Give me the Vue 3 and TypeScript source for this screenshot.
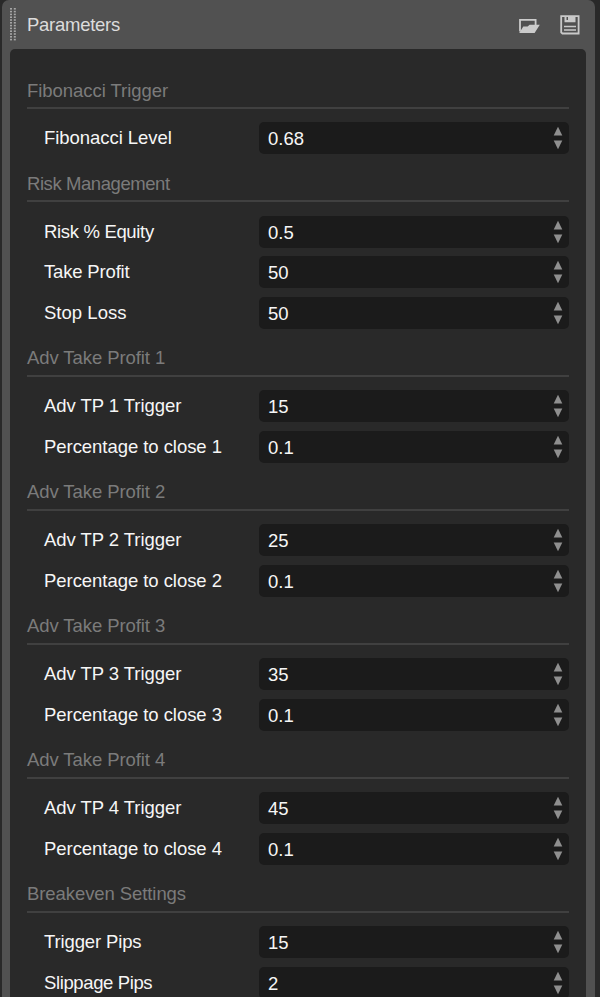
<script setup lang="ts">
import { reactive } from 'vue'

interface Param {
  label: string
  value: string
  spacing: number
}

interface Group {
  title: string
  spacing: number
  params: Param[]
}

const param = (label: string, value: string, spacing = -0.05): Param => ({ label, value, spacing })

const groups = reactive<Group[]>([
  { title: 'Fibonacci Trigger', spacing: -0.05, params: [param('Fibonacci Level', '0.68')] },
  {
    title: 'Risk Management',
    spacing: -0.43,
    params: [
      param('Risk % Equity', '0.5', -0.33),
      param('Take Profit', '50', -0.17),
      param('Stop Loss', '50', 0.03),
    ],
  },
  ...[1, 2, 3, 4].map((n) => ({
    title: `Adv Take Profit ${n}`,
    spacing: -0.08,
    params: [param(`Adv TP ${n} Trigger`, `${n * 10 + 5}`), param(`Percentage to close ${n}`, '0.1')],
  })),
  {
    title: 'Breakeven Settings',
    spacing: -0.08,
    params: [param('Trigger Pips', '15', -0.13), param('Slippage Pips', '2', -0.38)],
  },
])
</script>

<template>
  <div class="window">
    <section class="panel">
      <header class="header">
        <svg class="grip" width="6" height="34" viewBox="0 0 6 34">
          <template v-for="i in 12" :key="i">
            <rect x="0" :y="(i - 1) * 2.8" width="2" height="1.6" />
            <rect x="3.8" :y="(i - 1) * 2.8" width="2" height="1.6" />
          </template>
        </svg>
        <h1 class="heading">Parameters</h1>
        <svg class="icon open" width="21" height="16" viewBox="0 0 21 16">
          <path d="M1 13.5V1.9H16.6V7" fill="none" stroke="#cbcbcb" stroke-width="1.8" />
          <path d="M0.2 15L4.3 8.6H8.6L10.6 6.8H20.8L15.6 15Z" fill="#cbcbcb" />
        </svg>
        <svg class="icon save" width="20" height="20" viewBox="0 0 20 20">
          <path d="M1.2 1.2H18.6V18.5H2.4L1.2 17.4Z" fill="none" stroke="#c9c9c9" stroke-width="1.8" />
          <path d="M4.5 1H15.5V7.3H4.5ZM6.5 2V5H8V2Z" fill="#c9c9c9" fill-rule="evenodd" />
          <path d="M4 11.5H16M4 15H16" stroke="#c9c9c9" stroke-width="1.6" />
        </svg>
      </header>
      <div class="body">
        <div v-for="group in groups" :key="group.title" class="group">
          <h2 class="title"><span :style="{ letterSpacing: group.spacing + 'px' }">{{ group.title }}</span></h2>
          <div v-for="p in group.params" :key="p.label" class="row">
            <span class="label" :style="{ letterSpacing: p.spacing + 'px' }">{{ p.label }}</span>
            <div class="field">
              <span class="value">{{ p.value }}</span>
              <svg class="spinner" width="10" height="24" viewBox="0 0 10 24">
                <path d="M5 0.8L9.3 9.6H0.7Z" />
                <path d="M5 23.2L9.3 14.4H0.7Z" />
              </svg>
            </div>
          </div>
        </div>
      </div>
    </section>
  </div>
</template>

<style>
body {
  background: #292929;
}
</style>

<style scoped>
.window {
  box-sizing: border-box;
  height: 997px;
  overflow: hidden;
  padding: 0 5px 0 2px;
  background: #292929;
  font-family: 'Liberation Sans', Arial, sans-serif;
  font-size: 18.5px;
}

.panel {
  box-sizing: border-box;
  height: 1010px;
  padding: 0 9px 0 8px;
  background: #515151;
  border-radius: 7px 7px 0 0;
}

.header {
  display: flex;
  align-items: center;
  height: 49px;
  padding-right: 6px;
}

.grip {
  fill: #a6a6a6;
  margin-right: 11px;
}

.heading {
  flex: 1;
  margin: 0;
  font-size: 18.5px;
  font-weight: 400;
  letter-spacing: -0.27px;
  line-height: 47px;
  color: #dcdcdc;
}

.open {
  margin: 2px 20px 0 0;
}

.body {
  box-sizing: border-box;
  height: 961px;
  padding: 21.5px 17px 0;
  background: #292929;
  border-radius: 5px 5px 0 0;
}

.title {
  box-sizing: border-box;
  height: 38.3px;
  margin: 0 0 13.5px;
  border-bottom: 2px solid #404040;
  font-size: 18.5px;
  font-weight: 400;
  line-height: 40px;
  color: #7b7b7b;
}

.group {
  padding-bottom: 0.8px;
}

.row {
  display: flex;
  height: 32px;
  margin-bottom: 8.7px;
  padding-left: 17px;
}

.label {
  width: 215px;
  line-height: 31px;
  color: #f6f6f6;
  white-space: nowrap;
}

.field {
  display: flex;
  flex: 1;
  align-items: center;
  justify-content: space-between;
  padding: 0 6px 0 9px;
  border-radius: 5px;
  background: #1b1b1b;
  color: #f6f6f6;
}

.value {
  padding-top: 2px;
  line-height: 30px;
}

.spinner {
  fill: #8f8f8f;
}
</style>
